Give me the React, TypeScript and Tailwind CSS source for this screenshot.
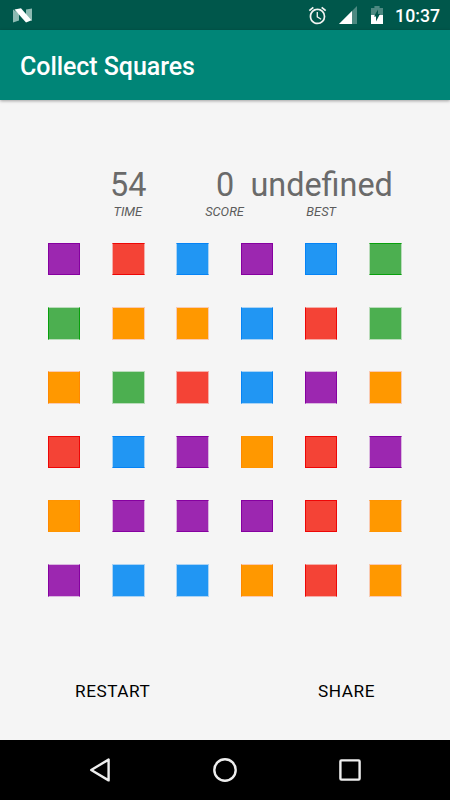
import React from 'react';

const COLORS = {
  purple: {
    fill: 'bg-[#9c27b0]',
    x: 'border-x-[#8600a0]',
    y: 'border-y-[#8600a0]',
    softX: 'border-x-[#9c27b0]/30',
    softY: 'border-y-[#9c27b0]/30',
  },
  red: {
    fill: 'bg-[#f44336]',
    x: 'border-x-[#ee0606]',
    y: 'border-y-[#ee0606]',
    softX: 'border-x-[#f44336]/40',
    softY: 'border-y-[#f44336]/40',
  },
  blue: {
    fill: 'bg-[#2196f3]',
    x: 'border-x-[#0583f5]',
    y: 'border-y-[#0583f5]',
    softX: 'border-x-[#2196f3]/35',
    softY: 'border-y-[#2196f3]/35',
  },
  green: {
    fill: 'bg-[#4caf50]',
    x: 'border-x-[#08a00c]',
    y: 'border-y-[#08a00c]',
    softX: 'border-x-[#4caf50]/35',
    softY: 'border-y-[#4caf50]/35',
  },
  orange: {
    fill: 'bg-[#ff9800]',
    x: 'border-x-[#ff8800]',
    y: 'border-y-[#ff9400]',
    softX: 'border-x-[#ff8a50]/40',
    softY: 'border-y-[#ff8a50]/40',
  },
};

type Color = keyof typeof COLORS;

const BOARD: Color[][] = [
  ['purple', 'red', 'blue', 'purple', 'blue', 'green'],
  ['green', 'orange', 'orange', 'blue', 'red', 'green'],
  ['orange', 'green', 'red', 'blue', 'purple', 'orange'],
  ['red', 'blue', 'purple', 'orange', 'red', 'purple'],
  ['orange', 'purple', 'purple', 'purple', 'red', 'orange'],
  ['purple', 'blue', 'blue', 'orange', 'red', 'orange'],
];

const STATS = [
  { label: 'TIME', value: '54' },
  { label: 'SCORE', value: '0' },
  { label: 'BEST', value: 'undefined' },
];

const SOFT_TRACKS = [1, 2, 5];

function Square({ color, row, col }: { color: Color; row: number; col: number }) {
  const c = COLORS[color];
  const softX = SOFT_TRACKS.includes(col);
  const softY = SOFT_TRACKS.includes(row);
  return (
    <button
      className={`block border bg-clip-padding ${c.fill} ${softX ? `w-[33px] ${c.softX}` : `w-8 ${c.x}`} ${
        softY ? `h-[33px] ${c.softY}` : `h-8 ${c.y}`
      }`}
    />
  );
}

function StatusBar() {
  return (
    <div className="h-[30px] shrink-0 bg-[#00574b] flex items-center pl-[13px] pr-[10px] text-white">
      <svg width="19" height="15" viewBox="0 0 19 15">
        <path d="M0 1.5L6 5.5V12.5L0 14.5ZM13 9V1.5L19 0.5V13L13 9Z" fill="#8dbab2" />
        <path d="M1.5 1.6L8 0.2L18.5 12.2L13 14.4Z" fill="#fff" />
      </svg>
      <div className="ml-auto flex items-center">
        <svg width="21" height="21" viewBox="0 0 24 24" fill="#f2f4f2">
          <path d="M22 5.72l-4.6-3.86-1.29 1.53 4.6 3.86L22 5.72zM7.88 3.39L6.6 1.86 2 5.71l1.29 1.53 4.59-3.85zM12.5 8H11v6l4.75 2.85.75-1.23-4-2.37V8zM12 4c-4.97 0-9 4.03-9 9s4.02 9 9 9a9 9 0 000-18zm0 16c-3.87 0-7-3.13-7-7s3.13-7 7-7 7 3.13 7 7-3.13 7-7 7z" />
        </svg>
        <svg className="ml-[11px]" width="18" height="18" viewBox="0 0 18 18">
          <path d="M0 18L18 0V18Z" fill="#4d8981" />
          <path d="M0 18L13 5V18Z" fill="#fff" />
        </svg>
        <svg className="ml-[14px]" width="12" height="18" viewBox="0 0 12 18">
          <path d="M0 2H3.4V0H8.6V2H12V18H0Z" fill="#4d8981" />
          <path d="M0 9H12V18H0Z" fill="#fff" />
          <path d="M7 3.5V8H9L5 15.5V10.5H3Z" fill="#00574b" />
        </svg>
        <span className="ml-3 w-[45px] text-right text-[17.7px] leading-[30px] pt-px font-medium">10:37</span>
      </div>
    </div>
  );
}

function NavBar() {
  return (
    <div className="h-[60px] shrink-0 bg-black flex justify-center gap-[97px] items-center">
      <svg width="28" height="28" viewBox="0 0 28 28" fill="none" stroke="#eee" strokeWidth="2.4" strokeLinejoin="round">
        <path d="M22.6 3.6V24.4L5.2 14Z" />
      </svg>
      <svg width="28" height="28" viewBox="0 0 28 28" fill="none" stroke="#eee" strokeWidth="2.4">
        <circle cx="14" cy="14" r="10.7" />
      </svg>
      <svg width="28" height="28" viewBox="0 0 28 28" fill="none" stroke="#eee" strokeWidth="2.4">
        <rect x="4.4" y="4.4" width="19.2" height="19.2" rx="1" />
      </svg>
    </div>
  );
}

export default function App() {
  return (
    <div className="w-[450px] h-[800px] flex flex-col bg-[#f5f5f5] font-['Roboto',sans-serif] overflow-hidden">
      <StatusBar />
      <header className="h-[70px] shrink-0 px-5 flex items-center bg-[#008577] shadow-[0_1px_3px_rgba(0,0,0,0.35)]">
        <h1 className="text-[25px] tracking-[-0.06px] font-medium text-white pt-[4px]">Collect Squares</h1>
      </header>

      <main className="flex-1 flex flex-col">
        {/* Score board */}
        <div className="mt-[66px] px-[80px] grid grid-cols-3">
          {STATS.map((stat) => (
            <div key={stat.label} className="flex flex-col items-center">
              <span className="text-[32.4px] leading-[38px] text-[#6a6a6a]">{stat.value}</span>
              <span className="text-[12.8px] leading-[16px] italic text-[#5c5c5c] pr-px">{stat.label}</span>
            </div>
          ))}
        </div>

        {/* Board */}
        <div className="mt-[23px] ml-12 grid grid-cols-[64px_64px_65px_64px_64px_33px] grid-rows-[64px_64px_65px_64px_64px_33px]">
          {BOARD.map((cells, row) =>
            cells.map((color, col) => <Square key={`${row}-${col}`} color={color} row={row} col={col} />)
          )}
        </div>

        {/* Actions */}
        <div className="mt-auto mb-[37px] px-[75px] flex justify-between text-[17.2px] leading-6 tracking-[0.55px] text-black">
          <button>RESTART</button>
          <button>SHARE</button>
        </div>
      </main>

      <NavBar />
    </div>
  );
}
